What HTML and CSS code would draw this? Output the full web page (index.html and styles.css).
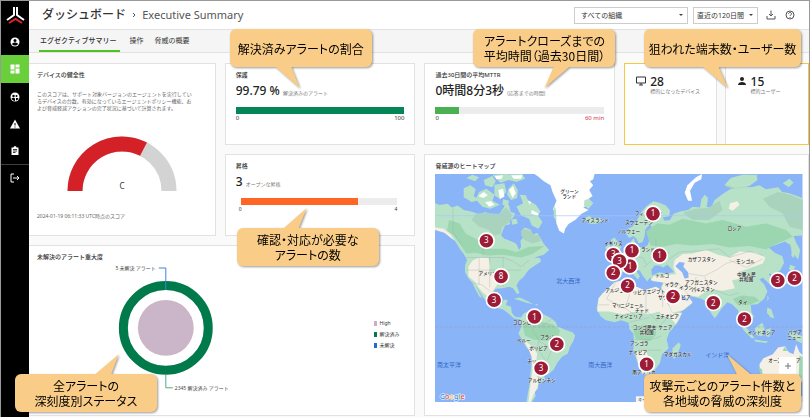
FILE: index.html
```html
<!DOCTYPE html>
<html lang="ja">
<head>
    <meta charset="UTF-8">
    <meta name="viewport" content="width=device-width, initial-scale=1.0">
    <title>ダッシュボード - Executive Summary</title>
    <link rel="stylesheet" href="styles.css">
</head>
<body>
    <nav class="sidebar">
        <a class="logo" href="#" aria-label="Home">
            <svg width="19" height="17" viewBox="0 0 19 17" fill="none" stroke-width="2">
                <path d="M8 0v8L1 13M11 0v8l7 5" stroke="#fff"/>
                <path d="M3 16l6.500-4 6.500 4" stroke="#e0262d"/>
            </svg>
        </a>
        <a class="nav-item" href="#" aria-label="Account">
            <svg width="10" height="10" viewBox="0 0 20 20"><circle cx="10" cy="10" r="9" fill="#fff"/><circle cx="10" cy="7" r="3" fill="#000"/><path d="M4 14c2-4 10-4 12 0-3 4-9 4-12 0z" fill="#000"/></svg>
        </a>
        <a class="nav-item active" href="#" aria-label="Dashboard">
            <svg width="10" height="10" viewBox="0 0 20 20" fill="#fff"><path d="M1 1h8v10H1zM11 1h8v6h-8zM1 13h8v6H1zM11 9h8v10h-8z"/></svg>
        </a>
        <a class="nav-item" href="#" aria-label="Users">
            <svg width="10" height="10" viewBox="0 0 20 20"><circle cx="10" cy="10" r="9" fill="#fff"/><circle cx="7" cy="8" r="2.500" fill="#000"/><circle cx="13" cy="8" r="2" fill="#000"/><path d="M3 13c2-2 6-2 7 0v5c-3 0-6-2-7-5zM12 12c2 0 4 0 5 1-1 2-3 4-5 4z" fill="#000"/></svg>
        </a>
        <a class="nav-item" href="#" aria-label="Alerts">
            <svg width="10" height="10" viewBox="0 0 20 20"><path d="M10 1l10 18H0z" fill="#fff"/><path d="M9 8h2v5H9zM9 15h2v2H9z" fill="#000"/></svg>
        </a>
        <a class="nav-item" href="#" aria-label="Reports">
            <svg width="10" height="10" viewBox="0 0 20 20"><path d="M3 3h4a3 3 0 0 1 6 0h4v15H3z" fill="#fff"/><path d="M6 7h8M6 10h8M6 13h5" stroke="#000" stroke-width="1.500"/></svg>
        </a>
        <a class="nav-item logout" href="#" aria-label="Logout">
            <svg width="10" height="10" viewBox="0 0 20 20" fill="none" stroke="#fff" stroke-width="2"><path d="M8 2H2v16h6M6 10h12M14 6l4 4-4 4"/></svg>
        </a>
    </nav>

    <div class="page">
        <header class="header">
            <h1 class="title">ダッシュボード <svg class="chevron" width="4" height="6" viewBox="0 0 4 6"><path d="M1 1l2 2-2 2" fill="none" stroke="#555"/></svg> <span>Executive Summary</span></h1>
            <div class="tools">
                <div class="select select-org">
                    <select aria-label="組織"><option>すべての組織</option></select>
                </div>
                <div class="select select-period">
                    <select aria-label="期間"><option>直近の120日間</option></select>
                </div>
                <button class="icon-btn" aria-label="ダウンロード">
                    <svg width="10" height="10" viewBox="0 0 20 20" fill="none" stroke="#555" stroke-width="2"><path d="M10 1v11M6 8l4 4 4-4M2 12v6h16v-6"/></svg>
                </button>
                <button class="icon-btn" aria-label="ヘルプ">
                    <svg width="10" height="10" viewBox="0 0 20 20" fill="none" stroke="#555" stroke-width="2"><circle cx="10" cy="10" r="8"/><path d="M7 8c0-4 6-4 6 0 0 2-3 2-3 4M10 14v2"/></svg>
                </button>
            </div>
        </header>
        <nav class="tabs">
            <a class="tab current" href="#">エグゼクティブサマリー</a>
            <a class="tab" href="#">操作</a>
            <a class="tab" href="#">脅威の概要</a>
        </nav>

        <main class="board">
            <section class="card health">
                <h2>デバイスの健全性</h2>
                <p class="desc">このスコアは、サポート対象バージョンのエージェントを実行してい<br>るデバイスの台数、有効になっているエージェントポリシー機能、お<br>よび脅威軽減アクションの完了状況に基づいて計算されます。</p>
                <svg class="gauge" width="110" height="56" viewBox="0 0 110 56" fill="none" stroke-width="15">
                    <path d="M8 55a47 47 0 0 1 94 0" stroke="#d3d3d3"/>
                    <path d="M8 55a47 47 0 0 1 68.500-41.800" stroke="#d42027"/>
                    <text class="grade" x="55" y="53">C</text>
                </svg>
                <p class="stamp">2024-01-19 06:11:33 UTC時点のスコア</p>
            </section>

            <section class="card metric protection">
                <h2>保護</h2>
                <p class="value">99.79 % <small>解決済みのアラート</small></p>
                <div class="bar"><div class="fill protect" style="width: 100%"></div></div>
                <div class="scale"><span>0</span><span>100</span></div>
                <div class="callout callout-protect">解決済みアラートの割合</div>
            </section>

            <section class="card metric response">
                <h2>過去30日間の平均MTTR</h2>
                <p class="value">0時間8分3秒 <small>(応答までの時間)</small></p>
                <div class="bar"><div class="fill mttr" style="width: 14%"></div></div>
                <div class="scale"><span>0</span><span class="limit">60 min</span></div>
                <div class="callout callout-mttr">アラートクローズまでの<br>平均時間（過去30日間）</div>
            </section>

            <section class="targets">
                <div class="target">
                    <svg width="10" height="10" viewBox="0 0 20 20"><path d="M1 2h18v12H1zM6 18h8M10 14v4" fill="none" stroke="#333" stroke-width="2"/></svg>
                    <p class="value">28<small>標的になったデバイス</small></p>
                </div>
                <div class="target">
                    <svg width="10" height="10" viewBox="0 0 20 20" fill="#222"><circle cx="10" cy="6" r="4"/><path d="M2 18c0-8 16-8 16 0z"/></svg>
                    <p class="value">15<small>標的ユーザー</small></p>
                </div>
                <div class="callout callout-targets">狙われた端末数・ユーザー数</div>
            </section>

            <section class="card metric escalation">
                <h2>昇格</h2>
                <p class="value">3 <small>オープンな昇格</small></p>
                <div class="bar"><div class="fill escalated" style="width: 75%"></div></div>
                <div class="scale"><span>0</span><span>4</span></div>
                <div class="callout callout-escalation">確認・対応が必要な<br>アラートの数</div>
            </section>

            <section class="card severity">
                <h2>未解決のアラート重大度</h2>
                <div class="severity-body">
                    <svg class="donut" viewBox="0 0 331 140" preserveAspectRatio="xMinYMin meet" fill="none">
                        <circle cx="129" cy="66" r="42.500" stroke="#007a4b" stroke-width="9"/>
                        <circle cx="129" cy="66" r="28" fill="#cbb5c8"/>
                        <path d="M122 6h7v22" stroke="#3c83dc"/>
                        <path d="M129 113v13h7" stroke="#55a886"/>
                        <text x="119" y="8" text-anchor="end">5 未解決 アラート</text>
                        <text x="138" y="128">2345 解決済み アラート</text>
                    </svg>
                    <ul class="legend">
                        <li class="high">High</li>
                        <li class="resolved">解決済み</li>
                        <li class="open">未解決</li>
                    </ul>
                </div>
                <div class="callout callout-severity">全アラートの<br>深刻度別ステータス</div>
            </section>

            <section class="card heatmap">
                <h2>脅威源のヒートマップ</h2>
                <div class="map">
                    <svg viewBox="18 12 1101 684">
                        <path class="sea" d="M18 12h1101v684H18z"/>
                        <!-- Arctic islands -->
                        <path class="land" d="M104 55L124 46 140 58 134 78 150 90 128 96 104 82zM112 24L130 14 150 22 138 34zM140 88L150 66 172 56 196 74 190 92 212 104 184 116 160 110zM164 30L190 18 200 34 190 52 168 46zM196 44L226 40 232 66 214 88 196 76zM190 14L236 12 244 28 214 38zM232 14L280 12 288 26 262 36 240 30zM238 56L254 40 266 60 264 84 246 90 234 74zM272 74L290 76 296 90 320 104 334 124 326 136 340 156 328 176 308 166 300 146 276 136 262 110 282 100zM222 88L240 92 236 108 220 104zM246 148L262 146 266 160 250 164z"/>
                        <path class="ice" d="M208 60L222 56 226 80 212 86zM240 60L252 48 260 70 250 84zM246 16L280 16 276 26 254 26zM148 78L164 66 176 76 162 84zM168 96L186 94 196 104 180 110zM296 92L306 96 302 104zM308 120L328 130 326 138 306 130zM196 18L222 16 218 26 202 28z"/>
                        <!-- North and Central America -->
                        <path class="land" d="M18 99L32 105 56 101 68 112 86 106 104 120 126 124 148 132 170 126 190 136 212 130 224 112 230 96 240 106 244 124 258 130 252 144 240 150 244 162 228 166 222 180 216 196 226 206 248 214 262 222 270 240 276 230 274 212 282 202 276 184 286 172 304 178 312 194 324 188 334 204 344 222 360 240 344 254 316 262 332 264 336 274 324 282 312 290 300 298 292 308 284 320 270 332 262 346 271 368 264 372 252 354 240 350 220 354 200 356 190 370 190 390 204 402 220 398 224 388 236 390 230 404 246 410 248 428 258 440 276 442 270 448 254 444 238 430 222 418 200 412 180 402 164 384 146 356 138 344 150 366 160 384 150 378 138 356 130 338 118 324 108 306 108 286 114 270 104 252 92 236 80 216 66 198 50 186 34 180 18 174z"/>
                        <path class="tundra" d="M140 132L170 128 212 132 230 112 250 134 240 158 220 170 214 192 196 196 176 178 150 170 128 150zM280 176L304 182 314 196 328 194 336 212 310 220 286 210 276 196z"/>
                        <path class="forest" d="M60 150L92 160 110 190 140 206 180 236 226 236 262 246 300 230 346 228 310 252 276 262 220 254 176 256 140 248 112 250 92 220 74 196 54 182z"/>
                        <path class="dry" d="M118 290L130 272 150 262 178 264 184 290 180 306 206 312 214 330 200 350 188 366 176 380 158 364 136 334 118 318zM18 172L44 176 64 192 78 212 66 204 46 188 18 180z"/>
                        <path class="border" d="M108 262H222L252 274 276 290 300 270M72 116V186L98 226M112 300H200M150 262V344M182 262V352M208 300H276M132 338L158 344 184 364M162 190V258M222 262V350"/>
                        <path class="land" d="M254 386L272 382 298 394 312 402 292 398 270 390zM318 402L328 402 322 406z"/>
                        <!-- Greenland, Iceland, Britain -->
                        <path class="ice" d="M316 12H496L492 28 482 34 492 46 480 60 490 78 476 88 480 102 462 112 478 120 456 132 440 148 418 162 408 176 404 190 390 182 382 160 378 134 372 116 382 92 370 66 364 46 344 34 328 20z"/>
                        <path class="land" d="M374 108L380 116 382 152 374 142zM466 90L480 86 492 100 478 116 464 106zM466 144L480 138 490 144 510 142 520 150 504 160 486 162 470 154zM546 238L552 222 544 210 556 202 566 216 576 234 560 244zM528 232L540 222 544 234 532 242z"/>
                        <!-- South America -->
                        <path class="land" d="M272 446L284 430 300 422 318 426 346 434 366 444 380 456 384 468 406 478 430 486 438 496 432 514 422 530 416 550 398 560 384 578 374 598 358 612 344 614 348 628 328 640 326 656 316 664 320 676 308 696H292L296 670 302 640 304 610 308 570 306 546 292 532 278 508 268 490 276 470z"/>
                        <path class="forest" d="M280 464L312 452 340 456 372 462 392 480 388 500 352 512 312 508 288 496z"/>
                        <path class="dry" d="M282 508L298 520 316 536 324 550 320 580 318 606 330 630 324 654 314 672 304 696 298 696 304 640 310 600 308 560 298 536z"/>
                        <path class="border" d="M320 444L310 480 330 510 324 534 348 568 338 598M368 446L336 470M330 514L370 534 354 570M300 436L292 470"/>
                        <!-- Africa -->
                        <path class="land" d="M540 352L556 336 590 328 616 332 618 348 646 360 680 350 706 366 714 400 730 426 742 432 758 428 750 448 736 468 720 486 712 508 718 534 698 552 692 578 674 602 656 612 640 614 628 590 620 562 612 538 614 510 612 490 600 476 598 458 576 450 556 456 530 450 514 438 502 414 508 384 520 370z"/>
                        <path class="dry" d="M540 352L556 336 590 328 616 332 618 348 646 360 680 350 706 366 714 400 730 426 758 428 740 462 724 444 700 440 690 424 660 432 620 424 580 432 540 424 504 424 508 384 520 370zM618 546L650 540 660 570 648 610 634 604z"/>
                        <path class="forest" d="M610 474L644 464 680 470 680 494 662 512 620 506z"/>
                        <path class="border" d="M560 336L532 386 588 416 612 336M590 416L620 436M650 362V420L684 454M600 456L660 442M616 508H666L696 498M636 540H696M716 440L690 470M508 404H540M700 366V410"/>
                        <path class="land" d="M730 534L748 516 754 524 744 556 734 566 728 554z"/>
                        <!-- Eurasia -->
                        <path class="land" d="M534 326L534 298 560 296 566 280 552 262 572 254 592 240 606 230 606 212 614 204 618 218 622 230 644 232 656 224 660 210 672 204 692 198 664 196 658 184 668 170 660 164 648 178 646 198 640 216 628 220 622 206 612 198 600 204 590 190 594 178 612 168 624 150 636 126 652 108 672 94 690 98 710 106 722 122 720 138 700 142 706 152 722 150 732 132 752 124 776 120 790 110 812 112 816 88 826 74 836 84 832 110 844 114 856 90 880 72 904 56 930 50 966 52 990 46 1010 58 1046 52 1058 66 1080 70 1119 84V196L1092 198 1100 218 1112 240 1106 268 1090 250 1082 224 1066 214 1040 224 1018 232 1036 248 1058 258 1064 278 1052 300 1034 314 1018 310 1028 336 1022 344 1010 332 1000 322 990 328 1004 342 1014 364 1004 386 984 402 964 404 966 426 974 440 956 456 944 440 936 426 938 456 952 488 940 476 932 450 926 420 908 402 894 396 876 416 860 440 852 440 840 420 834 396 816 386 784 378 772 374 782 388 788 400 766 418 740 432 728 428 716 398 702 374 694 352 702 336 672 334 662 322 654 334 640 316 632 302 616 296 632 318 626 328 606 306 592 298 578 308 562 330 546 334z"/>
                        <path class="tundra" d="M886 48L900 30 940 14 984 14 982 30 950 52 910 56zM1000 86L1046 66 1084 74 1119 90V180L1080 170 1060 130 1020 110zM760 128L800 116 836 114 870 92 880 120 840 150 790 150z"/>
                        <path class="forest" d="M650 184L684 160 720 164 760 146 830 160 880 150 950 170 1010 160 1070 180 1090 200 1040 222 1010 238 960 228 900 232 850 222 790 226 740 222 700 230 664 226zM910 386L936 376 976 380 990 392 960 404 926 406z"/>
                        <path class="dry" d="M736 270L760 252 790 250 830 240 866 254 900 262 930 244 980 248 1008 262 1000 280 966 292 932 304 930 326 908 330 916 354 880 362 850 358 826 366 806 380 772 374 790 396 760 420 730 428 704 374 698 352 704 338 664 330 672 318 718 314 740 312 732 290zM902 100L924 94 930 104 910 122 898 116z"/>
                        <path class="sea" d="M668 316L666 298 676 286 690 286 702 292 714 284 726 296 734 306 710 310 690 306zM738 288L750 276 766 278 762 290 776 306 778 322 766 326 758 306zM752 372L762 376 778 392 764 390z"/>
                        <path class="border" d="M668 232L672 268 642 292M720 266L750 246 810 242 870 236 900 262 960 244 1000 256M776 310L824 318 860 300 890 280 930 268M744 336L778 374M800 320L796 370M826 320L840 362M856 360L900 376 930 368M900 270L950 292 1000 266M932 400L944 376M704 338L740 350M612 260L640 262 652 284M680 206V232L720 248"/>
                        <path class="ice" d="M776 92L766 68 774 46 800 22 818 12 816 28 796 38 782 62 788 92z"/>
                        <path class="land" d="M886 44L904 24 940 14 982 16 984 30 960 48 920 54zM1060 40L1080 26 1092 38 1078 52zM1086 212L1092 224 1094 264 1086 258zM1082 284L1098 290 1090 302 1078 298zM1058 334L1072 326 1088 310 1094 322 1084 338 1064 342zM1014 376L1018 384 1014 394zM1014 412L1026 418 1034 444 1024 442 1012 428zM938 464L952 474 976 504 966 504 946 484zM976 474L998 458 1006 472 998 498 980 494zM976 508L1016 514 1010 518 976 514zM1010 478L1024 474 1020 500 1010 498zM1074 484L1096 488 1119 498V520L1098 510 1084 498zM852 430L860 438 856 446z"/>
                        <!-- Australia -->
                        <path class="dry" d="M990 582L1002 564 1030 552 1046 532 1066 528 1078 546 1092 552 1100 522 1110 546 1119 554V636L1088 632 1066 610 1036 616 1004 624 992 606z"/>
                        <path class="forest" d="M988 590L998 598 1000 620 992 608zM1110 556L1119 560V626L1108 616zM1064 530L1076 542 1060 542z"/>
                        <path class="graticule" d="M18 137H1119"/>
                        <path class="equator" d="M18 470H1119"/>

                        <g class="sea-labels">
                            <text x="417" y="339">北大西洋</text>
                            <text x="60" y="590">南太平洋</text>
                            <text x="513" y="589">南大西洋</text>
                            <text x="864" y="560">インド洋</text>
                        </g>
                        <g class="labels">
                            <text x="421" y="70">グリーン</text><text x="420" y="85">ランド</text>
                            <text x="498" y="157">アイスランド</text>
                            <text x="176" y="315">アメリカ</text>
                            <text x="286" y="461">コロンビア</text><text x="284" y="516">ペルー</text>
                            <text x="360" y="507">ブラジル</text><text x="328" y="539">ボリビア</text>
                            <text x="308" y="579">チリ</text><text x="338" y="634">アルゼンチン</text>
                            <text x="552" y="224">イギリス</text><text x="598" y="190">ノルウェー</text>
                            <text x="629" y="161">スウェーデン</text><text x="658" y="136">フィンランド</text>
                            <text x="642" y="244">ポーランド</text><text x="699" y="320">トルコ</text>
                            <text x="915" y="180">ロシア</text><text x="817" y="273">カザフスタン</text>
                            <text x="948" y="280">モンゴル</text><text x="951" y="319">中華人民</text><text x="950" y="334">共和国</text>
                            <text x="816" y="342">アフガニスタン</text><text x="821" y="364">パキスタン</text>
                            <text x="727" y="347">イラク</text><text x="770" y="356">イラン</text>
                            <text x="735" y="386">サウジアラビア</text><text x="940" y="402">タイ</text>
                            <text x="570" y="367">アルジェリア</text><text x="631" y="371">リビア</text><text x="680" y="368">エジプト</text>
                            <text x="562" y="410">マリ</text><text x="608" y="410">ニジェール</text><text x="638" y="425">チャド</text>
                            <text x="598" y="442">ナイジェリア</text><text x="714" y="443">エチオピア</text>
                            <text x="646" y="477">コンゴ民主</text><text x="652" y="492">共和国</text><text x="708" y="476">ケニア</text>
                            <text x="630" y="523">アンゴラ</text><text x="626" y="550">ナミビア</text>
                            <text x="644" y="610">南アフリカ</text><text x="745" y="558">マダガスカル</text>
                            <text x="996" y="492">インドネシア</text><text x="1065" y="574">オーストラリア</text>
                            <text x="1096" y="492">パプア</text><text x="1094" y="507">ニュー</text>
                        </g>
                        <g class="pins"></g>
                        <path d="M620 678h499v18H620z" fill="#f4f4f4"/>
                        <text class="credits" x="626" y="692">キーボード ショートカット</text>
                        <text class="google" x="32" y="687"><tspan fill="#4285f4">G</tspan><tspan fill="#ea4335">o</tspan><tspan fill="#fbbc05">o</tspan><tspan fill="#4285f4">g</tspan><tspan fill="#34a853">l</tspan><tspan fill="#ea4335">e</tspan></text>
                    </svg>
                    <button class="zoom-in" aria-label="拡大"><svg width="8" height="8" viewBox="0 0 8 8"><path d="M4 1v6M1 4h6" stroke="#777"/></svg></button>
                </div>
                <div class="callout callout-heatmap">攻撃元ごとのアラート件数と<br>各地域の脅威の深刻度</div>
            </section>
        </main>
    </div>

    <script src="map.js"></script>
</body>
</html>
```

FILE: map.js
```js
// [x, y, alerts] in the units of the map's viewBox
const alerts = [
    [172, 212, 3], [216, 319, 8], [195, 390, 3], [316, 440, 1], [383, 522, 2], [336, 594, 3],
    [671, 131, 1], [608, 242, 1], [552, 254, 3], [602, 288, 1], [571, 273, 3], [552, 308, 2],
    [691, 256, 1], [595, 347, 2], [731, 379, 2], [852, 398, 2], [945, 447, 2],
    [1045, 331, 3], [1095, 324, 2], [652, 582, 1],
];

document.querySelector('.pins').innerHTML = alerts.map(([x, y, n]) =>
    `<circle cx="${x}" cy="${y}" r="23"/><text x="${x}" y="${y + 8}">${n}</text>`
).join('');
```

FILE: styles.css
```css
* {
    box-sizing: border-box;
}

body {
    margin: 0;
    min-height: 100vh;
    display: flex;
    border: 1px solid #999;
    border-width: 1px 1px 0;
    background: #fafafa;
    color: #333;
    font-family: "Noto Sans", "Noto Sans CJK JP", sans-serif;
    font-size: 6px;
}

h1, h2, p, ul {
    margin: 0;
    padding: 0;
}

a {
    color: inherit;
    text-decoration: none;
}

/* Sidebar */
.sidebar {
    width: 28px;
    flex: none;
    background: #000;
}

.logo {
    display: flex;
    justify-content: center;
    height: 27px;
    padding-top: 6px;
}

.nav-item {
    display: flex;
    align-items: center;
    justify-content: center;
    height: 27px;
}

.nav-item.active {
    height: 28px;
    background: #69d03c;
}

.nav-item.logout {
    border-top: 1px solid #3a4047;
}

/* Header */
.page {
    flex: 1;
    min-width: 0;
}

.header {
    display: flex;
    align-items: center;
    justify-content: space-between;
    height: 29px;
    padding: 0 14px 0 13px;
    border-bottom: 1px solid #e2e2e2;
    background: #fff;
}

.title {
    font-size: 12px;
    font-weight: 500;
    line-height: 16px;
}

.title span {
    color: #555;
    font-size: 11px;
    font-weight: 400;
}

.chevron {
    margin: 0 3px 1px;
}

.tools {
    display: flex;
    align-items: center;
    gap: 5px;
}

.select {
    position: relative;
}

.select::after {
    content: "";
    position: absolute;
    right: 5px;
    top: 7px;
    border: 2px solid transparent;
    border-top-color: #444;
    pointer-events: none;
}

.select select {
    width: 100%;
    height: 17px;
    padding: 0 6px;
    appearance: none;
    border: 1px solid #ccc;
    border-radius: 0;
    background: #fff;
    color: #333;
    font-family: inherit;
    font-size: 7px;
}

.select-org {
    width: 114px;
}

.select-period {
    width: 65px;
}

.select-period select {
    padding: 0 3px;
}

.icon-btn {
    display: flex;
    margin-left: 3px;
    padding: 0;
    border: 0;
    background: none;
}

.icon-btn + .icon-btn {
    margin-left: 4px;
}

.tabs {
    display: flex;
    gap: 9px;
    height: 23px;
    padding: 0 10px;
    border-bottom: 1px solid #e2e2e2;
    background: #f5f5f5;
    font-size: 7px;
    line-height: 22px;
}

.tab {
    padding: 0 1px;
}

.tab.current {
    padding-right: 3px;
    border-bottom: 2px solid #4dc424;
    font-weight: 500;
}

/* Cards */
.board {
    display: grid;
    grid-template-columns: 187fr 191fr 191fr 185fr;
    grid-template-rows: 82px 82px auto;
    grid-template-areas:
        "health protection response targets"
        "health escalation heatmap heatmap"
        "severity severity heatmap heatmap";
    gap: 9px;
    padding-top: 10px;
}

.card {
    position: relative;
    min-width: 0;
    padding: 7px 10px;
    border: 1px solid #e2e2e2;
    background: #fff;
}

.card h2 {
    font-size: 6px;
    font-weight: 500;
    line-height: 9px;
}

.health {
    grid-area: health;
    padding: 7px 8px;
    border-left: 0;
}

.protection {
    grid-area: protection;
}

.response {
    grid-area: response;
}

.desc {
    margin-top: 11px;
    color: #666;
    font-size: 5px;
    line-height: 7px;
    white-space: nowrap;
}

.gauge {
    display: block;
    margin: 24px auto 0;
}

.grade {
    fill: #333;
    stroke: none;
    font-size: 8px;
    text-anchor: middle;
}

.stamp {
    margin-top: 21px;
    color: #666;
    font-size: 5px;
    line-height: 7px;
}

.value {
    color: #222;
    font-size: 12px;
    font-weight: 500;
    line-height: 16px;
}

.value small {
    color: #777;
    font-size: 5px;
    font-weight: 400;
}

.metric .value {
    margin-top: 3px;
}

.bar {
    height: 7px;
    margin-top: 6px;
    background: #ececec;
}

.fill {
    height: 100%;
}

.fill.protect {
    background: #048656;
}

.fill.mttr {
    background: #4bb052;
}

.fill.escalated {
    background: #ff6524;
}

.scale {
    display: flex;
    justify-content: space-between;
    line-height: 9px;
}

.limit {
    color: #d0344a;
}

.escalation {
    grid-area: escalation;
}

.escalation .bar {
    margin: 6px 7px 0 5px;
}

.escalation .scale {
    margin: 0 7px 0 3px;
    font-size: 5px;
}

.targets {
    grid-area: targets;
    position: relative;
    display: grid;
    grid-template-columns: 92fr 84fr;
    gap: 8px;
    border: 1px solid #f5c842;
}

.target {
    display: flex;
    gap: 4px;
    padding: 12px 0 0 11px;
    border-right: 1px solid #e2e2e2;
    background: #fff;
}

.target + .target {
    border-left: 1px solid #e2e2e2;
    border-right: 0;
}

.target .value {
    line-height: 12px;
}

.target .value small {
    display: block;
    line-height: 7px;
}

/* Alert severity */
.severity {
    grid-area: severity;
    padding: 7px 8px;
    border-left: 0;
}

.severity-body {
    display: flex;
    align-items: center;
}

.donut {
    flex: 1;
    min-width: 0;
    height: 140px;
}

.donut text {
    fill: #444;
    font-size: 5px;
}

.legend {
    width: 39px;
    margin-top: 4px;
    list-style: none;
    font-size: 5px;
    line-height: 11px;
}

.legend li {
    display: flex;
    align-items: center;
    gap: 2px;
    padding-left: 7px;
}

.legend li::before {
    content: "";
    width: 3px;
    height: 5px;
    background: #c9b0c6;
}

.legend .resolved::before {
    background: #007a4b;
}

.legend .open::before {
    background: #1a6fe0;
}

/* Heat map */
.heatmap {
    grid-area: heatmap;
    padding: 7px 5px 13px 10px;
}

.map {
    position: relative;
    margin-top: 3px;
}

.map > svg {
    display: block;
    width: 100%;
}

.sea {
    fill: #8ab4f8;
}

.land {
    fill: #b7e2c8;
}

.tundra {
    fill: #a9d3bd;
}

.forest {
    fill: #9bd6b0;
}

.dry {
    fill: #f5f0e5;
}

.ice {
    fill: #fff;
}

.border {
    fill: none;
    stroke: #9aa8a4;
    stroke-width: 1;
}

.graticule {
    stroke: #a7c6fa;
    stroke-width: 2;
}

.equator {
    stroke: #9a9fc8;
    stroke-width: 2;
    stroke-dasharray: 9 5;
}

.labels text {
    fill: #222;
    stroke: #fff9;
    stroke-width: 2;
    paint-order: stroke;
    font-size: 14px;
    font-weight: 500;
    text-anchor: middle;
}

.sea-labels text {
    fill: #2f66c4;
    font-size: 18px;
    text-anchor: middle;
}

.pins circle {
    fill: #9c1b36;
    stroke: #fff;
    stroke-width: 5;
}

.pins text {
    fill: #fff;
    font-size: 24px;
    text-anchor: middle;
}

.google {
    stroke: #fff;
    stroke-width: 3;
    paint-order: stroke;
    font-size: 22px;
    font-weight: 500;
}

.credits {
    fill: #444;
    font-size: 13px;
}

.zoom-in {
    position: absolute;
    right: 7px;
    bottom: 28px;
    display: flex;
    align-items: center;
    justify-content: center;
    width: 17px;
    height: 17px;
    padding: 0;
    border: 0;
    background: #fff;
}

/* Callouts */
.callout {
    position: absolute;
    z-index: 1;
    display: flex;
    align-items: center;
    justify-content: center;
    width: 142px;
    height: 38px;
    border-radius: 6px;
    background: #f9cd88;
    color: #000;
    filter: drop-shadow(1px 1px 1px #0006);
    font-family: "Noto Sans CJK JP", sans-serif;
    font-feature-settings: "palt";
    font-size: 12px;
    line-height: 15px;
    text-align: center;
    white-space: nowrap;
}

.callout::after {
    content: "";
    position: absolute;
    top: 100%;
    width: 26px;
    height: 21px;
    background: #f9cd88;
}

.callout-protect {
    left: 4px;
    top: -35px;
}

.callout-protect::after {
    left: 46px;
    clip-path: polygon(0 0, 60% 0, 92% 100%);
}

.callout-mttr {
    left: 48px;
    top: -35px;
}

.callout-mttr::after {
    left: 71px;
    clip-path: polygon(35% 0, 95% 0, 0 100%);
}

.callout-targets {
    right: 7px;
    top: -35px;
    width: 157px;
}

.callout-targets::after {
    left: 59px;
    clip-path: polygon(0 0, 60% 0, 95% 100%);
}

.callout-escalation {
    left: 11px;
    top: 73px;
}

.callout-escalation::after {
    top: -20px;
    left: 46px;
    clip-path: polygon(0 100%, 60% 100%, 92% 0);
}

.callout-severity {
    left: -14px;
    bottom: 3px;
}

.callout-severity::after {
    top: -20px;
    left: 79px;
    clip-path: polygon(0 100%, 65% 100%, 95% 0);
}

.callout-heatmap {
    right: 7px;
    bottom: 3px;
    width: 157px;
}

.callout-heatmap::after {
    top: -20px;
    left: 83px;
    clip-path: polygon(40% 100%, 95% 100%, 0 0);
}
```
